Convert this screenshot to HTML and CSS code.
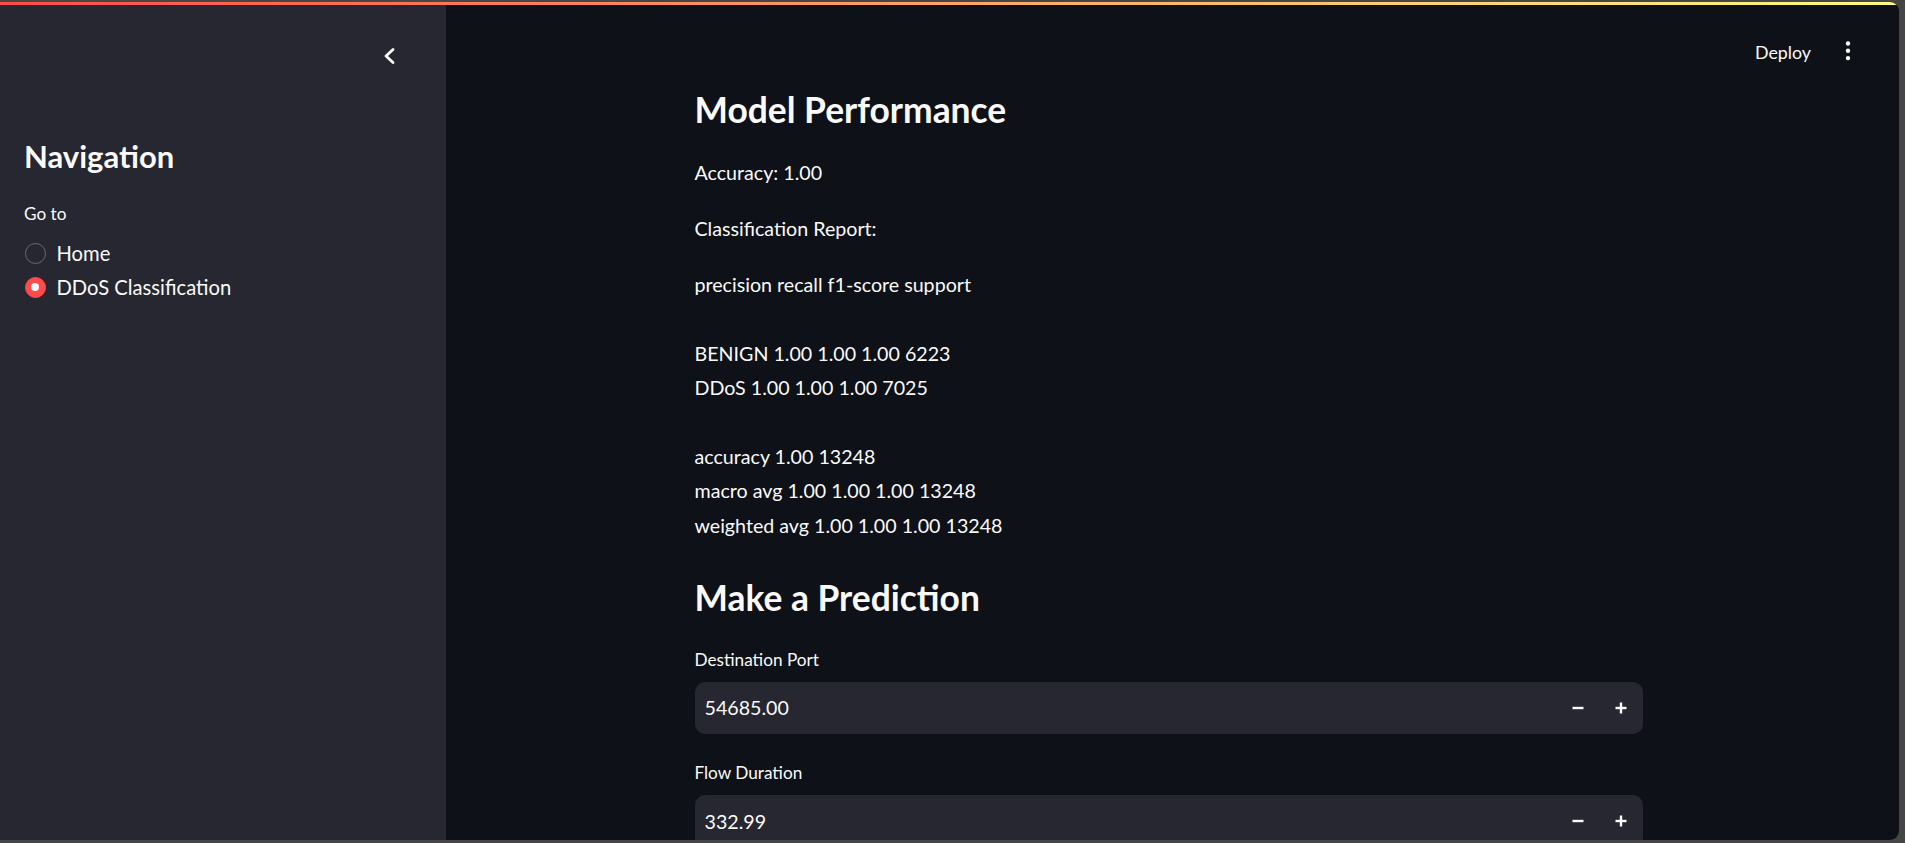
FILE: index.html
```html
<!DOCTYPE html>
<html lang="en">
<head>
<meta charset="utf-8">
<title>DDoS Classification</title>
<link rel="stylesheet" href="styles.css">
</head>
<body>
<div class="app">
  <div class="decoration"></div>
  <aside class="sidebar">
    <div class="sb-top">
      <button class="collapse" aria-label="Collapse sidebar">
        <svg width="24" height="24" viewBox="0 0 24 24"><polyline points="16,5.5 9,12 16,18.5" fill="none" stroke="#fafafa" stroke-width="2.8" stroke-linecap="round" stroke-linejoin="round"/></svg>
      </button>
    </div>
    <h2 class="sb-title">Navigation</h2>
    <div class="sb-label">Go to</div>
    <div class="radio-group">
      <label class="radio"><span class="dot"></span><span class="radio-text">Home</span></label>
      <label class="radio selected"><span class="dot"></span><span class="radio-text">DDoS Classification</span></label>
    </div>
  </aside>
  <main class="main">
    <header class="topbar">
      <span class="deploy">Deploy</span>
      <span class="kebab" aria-label="Menu">
        <svg width="24" height="24" viewBox="0 0 24 24"><circle cx="12" cy="4.5" r="2.2" fill="#fafafa"/><circle cx="12" cy="11.8" r="2.2" fill="#fafafa"/><circle cx="12" cy="19.1" r="2.2" fill="#fafafa"/></svg>
      </span>
    </header>
    <section class="content">
      <h3 class="heading">Model Performance</h3>
      <p class="text">Accuracy: 1.00</p>
      <p class="text">Classification Report:</p>
      <p class="text">precision recall f1-score support<br><br>BENIGN 1.00 1.00 1.00 6223<br>DDoS 1.00 1.00 1.00 7025<br><br>accuracy 1.00 13248<br>macro avg 1.00 1.00 1.00 13248<br>weighted avg 1.00 1.00 1.00 13248</p>
      <h3 class="heading heading-2">Make a Prediction</h3>
      <div class="field">
        <div class="field-label">Destination Port</div>
        <div class="number-input">
          <span class="value">54685.00</span>
          <span class="step"><svg width="12" height="12" viewBox="0 0 12 12"><rect x="0.5" y="4.8" width="11" height="2.4" fill="#fafafa"/></svg></span>
          <span class="step"><svg width="12" height="12" viewBox="0 0 12 12"><rect x="0.5" y="4.8" width="11" height="2.4" fill="#fafafa"/><rect x="4.8" y="0.5" width="2.4" height="11" fill="#fafafa"/></svg></span>
        </div>
      </div>
      <div class="field">
        <div class="field-label">Flow Duration</div>
        <div class="number-input">
          <span class="value">332.99</span>
          <span class="step"><svg width="12" height="12" viewBox="0 0 12 12"><rect x="0.5" y="4.8" width="11" height="2.4" fill="#fafafa"/></svg></span>
          <span class="step"><svg width="12" height="12" viewBox="0 0 12 12"><rect x="0.5" y="4.8" width="11" height="2.4" fill="#fafafa"/><rect x="4.8" y="0.5" width="2.4" height="11" fill="#fafafa"/></svg></span>
        </div>
      </div>
    </section>
  </main>
</div>
</body>
</html>
```
FILE: styles.css
```css
* { box-sizing: border-box; }
html, body {
  margin: 0;
  height: 843px;
  overflow: hidden;
}
body {
  background: #464646;
  padding-top: 2px;
  font-family: Lato, "Liberation Sans", sans-serif;
  color: #fafafa;
}
.app {
  position: relative;
  width: 1899px;
  height: 838px;
  display: flex;
  border-radius: 0 9px 9px 0;
  overflow: hidden;
  background: #0e1117;
}
.decoration {
  position: absolute;
  top: 0;
  left: 0;
  right: 0;
  height: 3px;
  background: linear-gradient(90deg, rgb(255, 75, 75), rgb(255, 253, 128));
  z-index: 5;
}
.sidebar {
  width: 446px;
  flex: none;
  background: #262730;
  padding: 42px 24px 0 24px;
}
.sb-top {
  height: 24px;
  display: flex;
  justify-content: flex-end;
  padding-right: 21px;
}
.collapse {
  border: 0;
  background: none;
  padding: 0;
  width: 24px;
  height: 24px;
  display: block;
}
.collapse svg { display: block; }
.sb-title {
  margin: 70px 0 0 0;
  font-size: 31px;
  line-height: 37.2px;
  font-weight: 700;
}
.sb-label {
  margin-top: 23.5px;
  font-size: 17.2px;
  line-height: 29.87px;
}
.radio-group {
  margin-top: 7.6px;
  display: flex;
  flex-direction: column;
}
.radio {
  height: 34px;
  display: flex;
  align-items: center;
  gap: 11px;
  font-size: 20.2px;
  line-height: 34px;
}
.dot {
  width: 21px;
  height: 21px;
  border-radius: 50%;
  border: 1.6px solid #6a6b72;
  flex: none;
  display: flex;
  align-items: center;
  justify-content: center;
  margin-left: 0.5px;
}
.radio.selected .dot {
  background: #ff4b4b;
  border-color: #ff4b4b;
}
.radio.selected .dot::after {
  content: "";
  width: 8px;
  height: 8px;
  border-radius: 50%;
  background: #fafafa;
}
.main {
  flex: 1;
  display: flex;
  flex-direction: column;
  padding-right: 8px;
}
.topbar {
  height: 85.9px;
  flex: none;
  display: flex;
  justify-content: flex-end;
  align-items: flex-start;
  padding: 37px 31px 0 0;
  gap: 25px;
}
.deploy {
  font-size: 17.8px;
  line-height: 24px;
  margin-top: 1px;
}
.kebab svg { display: block; }
.content {
  width: 948px;
  margin: 0 auto;
}
.heading {
  margin: 0 0 23px 0;
  font-size: 35.4px;
  line-height: 44.8px;
  font-weight: 700;
}
.heading-2 {
  margin-top: 33px;
  margin-bottom: 0;
}
.text {
  margin: 0 0 21.6px 0;
  font-size: 19.65px;
  line-height: 34.4px;
}
.field {
  margin-top: 23.8px;
}
.field-label {
  font-size: 17.2px;
  line-height: 29.87px;
  margin-bottom: 7.5px;
}
.number-input {
  height: 52px;
  background: #262730;
  border-radius: 10px;
  display: flex;
  align-items: center;
  padding-left: 10px;
}
.value {
  flex: 1;
  font-size: 19.65px;
}
.step {
  width: 43px;
  height: 52px;
  display: flex;
  align-items: center;
  justify-content: center;
}
.step svg { display: block; }
```
